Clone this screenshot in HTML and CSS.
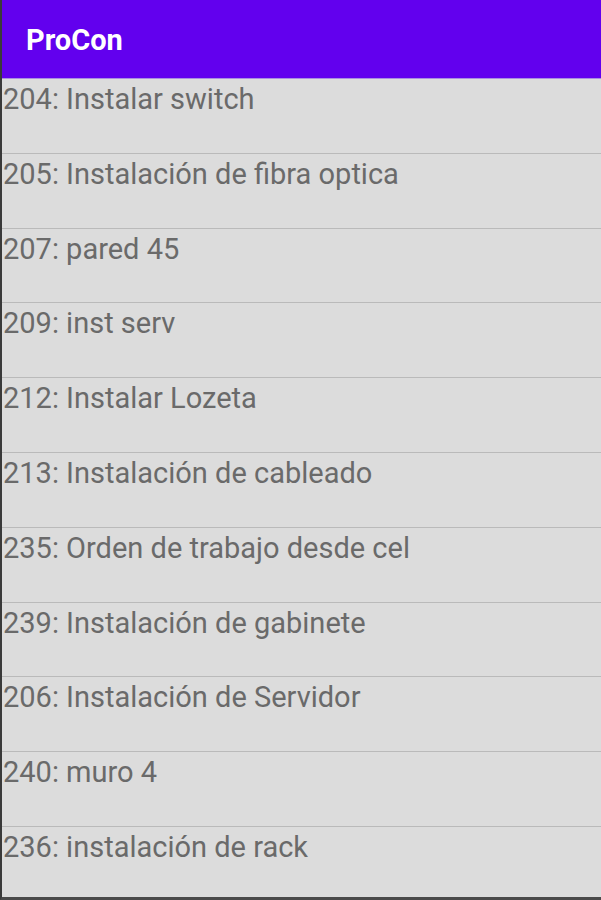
FILE: index.html
```html
<!DOCTYPE html>
<html lang="es">
<head>
  <meta charset="UTF-8">
  <meta name="viewport" content="width=device-width, initial-scale=1.0">
  <title>ProCon</title>
  <link rel="stylesheet" href="styles.css">
</head>
<body>
  <div class="screen">
    <header class="app-bar">ProCon</header>

    <ul class="order-list">
      <li class="order-item">204: Instalar switch</li>
      <li class="order-item">205: Instalación de fibra optica</li>
      <li class="order-item">207: pared 45</li>
      <li class="order-item">209: inst serv</li>
      <li class="order-item">212: Instalar Lozeta</li>
      <li class="order-item">213: Instalación de cableado</li>
      <li class="order-item">235: Orden de trabajo desde cel</li>
      <li class="order-item">239: Instalación de gabinete</li>
      <li class="order-item">206: Instalación de Servidor</li>
      <li class="order-item">240: muro 4</li>
      <li class="order-item">236: instalación de rack</li>
    </ul>
  </div>
</body>
</html>
```

FILE: styles.css
```css
body {
  margin: 0;
  padding: 0;
  background-color: #dcdcdc;
  font-family: Roboto, "Liberation Sans", sans-serif;
}
.screen {
  height: 900px;
  overflow: hidden;
  border-left: 2px solid #3a3a3a;
  border-bottom: 3px solid #4a4a4a;
  box-sizing: border-box;
  background-color: #dcdcdc;
}
.app-bar {
  height: 79px;
  display: flex;
  align-items: center;
  padding-left: 24px;
  padding-top: 1px;
  box-sizing: border-box;
  background-color: #6200ee;
  color: #fff;
  font-size: 29px;
  font-weight: bold;
  border-bottom: 1px solid #a98fe0;
}
.order-list {
  list-style-type: none;
  margin: 0;
  padding: 0;
}
.order-item {
  height: 70.8px;
  padding-top: 3px;
  padding-left: 1px;
  border-bottom: 1px solid #bababa;
  color: #6a6a6a;
  font-size: 29px;
  line-height: 34px;
}
```
